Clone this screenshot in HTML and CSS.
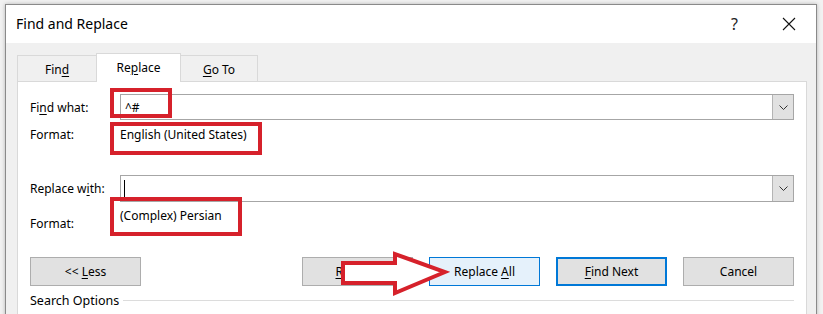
FILE: index.html
```html
<!DOCTYPE html>
<html lang="en">

<head>
    <meta charset="UTF-8">
    <title>Find and Replace</title>
    <link rel="stylesheet" href="styles.css">
</head>

<body>
    <div class="screen">
        <div class="dialog">
            <!-- Title bar -->
            <div class="titlebar">
                <span class="title">Find and Replace</span>
                <span class="help">?</span>
                <svg class="close" width="14" height="14" viewBox="0 0 14 14">
                    <path d="M1 1 L13 13 M13 1 L1 13" stroke="#111" stroke-width="1.1" fill="none" />
                </svg>
            </div>

            <div class="dialog-body">
                <!-- Tabs -->
                <div class="tabs">
                    <div class="tab tab-find">Fin<u>d</u></div>
                    <div class="tab tab-replace active">Re<u>p</u>lace</div>
                    <div class="tab tab-goto"><u>G</u>o To</div>
                </div>

                <div class="panel">
                    <div class="field-row">
                        <span class="label">Fi<u>n</u>d what:</span>
                        <div class="combo">
                            <span class="combo-text">^#</span>
                            <span class="combo-btn">
                                <svg width="9" height="5" viewBox="0 0 9 5"><path d="M0.5 0.5 L4.5 4.5 L8.5 0.5" stroke="#333" fill="none" /></svg>
                            </span>
                        </div>
                    </div>

                    <div class="format-row">
                        <span class="label">Format:</span>
                        <span class="value">English (United States)</span>
                    </div>

                    <div class="field-row replace-row">
                        <span class="label">Replace w<u>i</u>th:</span>
                        <div class="combo combo-tall">
                            <span class="combo-text"><span class="caret"></span></span>
                            <span class="combo-btn">
                                <svg width="9" height="5" viewBox="0 0 9 5"><path d="M0.5 0.5 L4.5 4.5 L8.5 0.5" stroke="#333" fill="none" /></svg>
                            </span>
                        </div>
                    </div>

                    <div class="format-row format-row-2">
                        <span class="label">Format:</span>
                        <span class="value">(Complex) Persian</span>
                    </div>

                    <!-- Buttons -->
                    <div class="button-row">
                        <button class="btn">&lt;&lt; <u>L</u>ess</button>
                        <div class="button-group">
                            <button class="btn"><u>R</u>eplace</button>
                            <button class="btn btn-hover">Replace <u>A</u>ll</button>
                            <button class="btn btn-default"><u>F</u>ind Next</button>
                            <button class="btn">Cancel</button>
                        </div>
                    </div>

                    <div class="options-row">
                        <span>Search Options</span>
                        <span class="options-line"></span>
                    </div>
                </div>
            </div>
        </div>

        <!-- Annotations drawn over the dialog -->
        <div class="mark mark-find"></div>
        <div class="mark mark-format"></div>
        <div class="mark mark-persian"></div>
        <svg class="arrow" width="112" height="50" viewBox="0 0 112 50">
            <polygon points="5,14 57,14 57,5 107,23 57,44 57,34 5,34" fill="#fff" stroke="#d6212b" stroke-width="4" stroke-linejoin="miter" />
        </svg>
    </div>
</body>

</html>
```

FILE: styles.css
```css
/* Base */
body {
    margin: 0;
    background: #f2f2f2;
    font-family: "Noto Sans", "Open Sans", Arial, sans-serif;
    font-size: 12px;
    color: #000;
    overflow: hidden;
}

.screen {
    position: relative;
    width: 823px;
    height: 314px;
    overflow: hidden;
}

u {
    text-decoration: underline;
    text-underline-offset: 2px;
}

/* Dialog window */
.dialog {
    margin: 4px 0 0 5px;
    width: 810px;
    height: 330px;
    border: 1px solid #8a8a8a;
    background: #f0f0f0;
    box-shadow: 0 0 4px rgba(0, 0, 0, 0.25);
    display: flex;
    flex-direction: column;
}

.titlebar {
    height: 38px;
    background: #fff;
    display: flex;
    align-items: center;
    padding-left: 10px;
}

.title {
    font-size: 14px;
    flex: 1;
    padding-bottom: 1px;
}

.help {
    font-size: 16px;
    color: #222;
    margin-right: 44px;
}

.close {
    margin-right: 20px;
}

.dialog-body {
    flex: 1;
    padding: 10px 9px 0 11px;
    display: flex;
    flex-direction: column;
}

/* Tabs */
.tabs {
    display: flex;
    align-items: flex-end;
    height: 28px;
}

.tab {
    border: 1px solid #d9d9d9;
    border-bottom: none;
    display: flex;
    align-items: center;
    justify-content: center;
    padding-top: 1px;
    box-sizing: border-box;
    height: 26px;
    font-size: 12px;
}

.tab-find {
    width: 79px;
    border-right: none;
}

.tab-replace {
    width: 85px;
}

.tab-goto {
    width: 77px;
    border-left: none;
}

.tab.active {
    height: 29px;
    background: #fff;
    margin-bottom: -1px;
    position: relative;
    z-index: 1;
    padding-top: 0;
    padding-bottom: 2px;
}

.panel {
    flex: 1;
    background: #fff;
    border: 1px solid #d9d9d9;
    padding: 12px 12px 0 12px;
}

/* Rows */
.field-row {
    display: flex;
    align-items: center;
}

.label {
    width: 90px;
    flex-shrink: 0;
}

.combo {
    flex: 1;
    height: 26px;
    box-sizing: border-box;
    border: 1px solid #a6a6a6;
    display: flex;
}

.combo-tall {
    height: 27px;
}

.combo-text {
    flex: 1;
    padding-left: 4px;
    display: flex;
    align-items: center;
}

.caret {
    width: 1px;
    height: 17px;
    background: #000;
    margin-left: -1px;
}

.combo-btn {
    width: 20px;
    background: #e1e1e1;
    border-left: 1px solid #b4b4b4;
    display: flex;
    align-items: center;
    justify-content: center;
}

.format-row {
    display: flex;
    height: 30px;
    line-height: 30px;
}

.replace-row {
    margin-top: 25px;
}

.format-row-2 {
    height: 44px;
    line-height: 16px;
    align-items: flex-start;
}

.format-row-2 .label {
    margin-top: 14px;
}

.format-row-2 .value {
    margin-top: 6px;
}

/* Buttons */
.button-row {
    display: flex;
    justify-content: space-between;
    margin-top: 11px;
}

.button-group {
    display: flex;
    gap: 16px;
}

.btn {
    width: 111px;
    height: 29px;
    font-family: inherit;
    font-size: 12px;
    color: #000;
    background: #e1e1e1;
    border: 1px solid #adadad;
    padding: 0;
}

.btn-hover {
    background: #e5f1fb;
    border-color: #0078d7;
}

.btn-default {
    border: 2px solid #0078d7;
}

.options-row {
    display: flex;
    align-items: center;
    margin-top: 6px;
    line-height: 18px;
    font-size: 12.5px;
}

.options-line {
    flex: 1;
    border-top: 1px solid #dcdcdc;
    margin-left: 4px;
    margin-top: -1px;
}

/* Red annotation boxes */
.mark {
    position: absolute;
    border: 4px solid #d6212b;
    box-sizing: border-box;
}

.mark-find {
    left: 110px;
    top: 88px;
    width: 62px;
    height: 30px;
}

.mark-format {
    left: 110px;
    top: 122px;
    width: 152px;
    height: 33px;
}

.mark-persian {
    left: 110px;
    top: 197px;
    width: 132px;
    height: 39px;
}

.arrow {
    position: absolute;
    left: 338px;
    top: 249px;
}
```
